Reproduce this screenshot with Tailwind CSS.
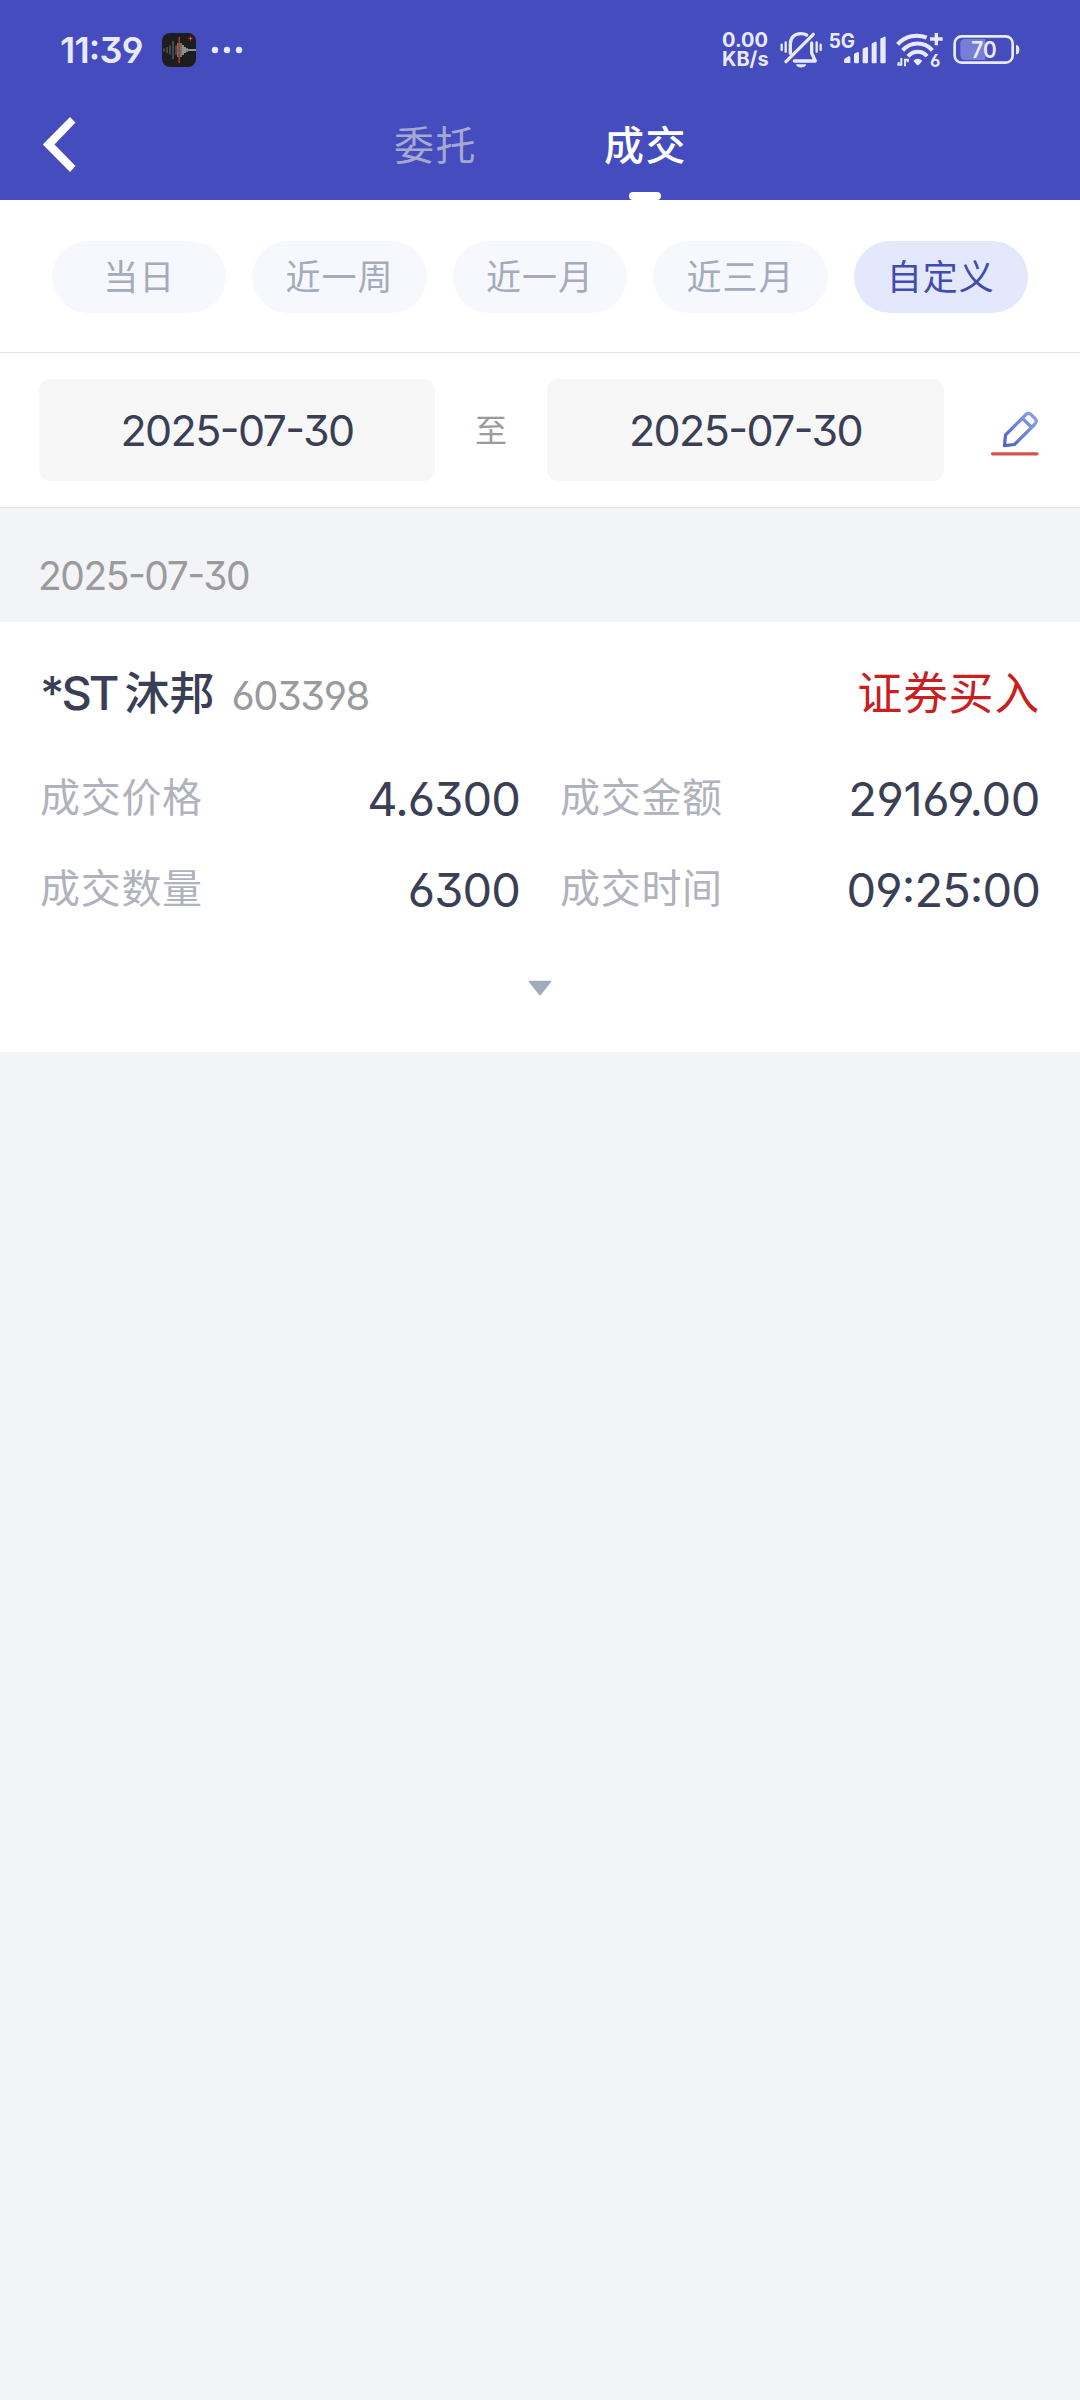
<!DOCTYPE html>
<html lang="zh-CN">
<head>
    <meta charset="UTF-8">
    <meta name="viewport" content="width=device-width, initial-scale=1.0">
    <title>成交查询</title>

    <!-- Tailwind CSS -->
    <script src="https://cdn.jsdelivr.net/npm/@tailwindcss/browser@4"></script>

    <style>
        /* Open 6/9, flat-top 3 and raised punctuation */
        body {
            font-family: Inter, "Noto Sans CJK SC", sans-serif;
            font-feature-settings: "cv03", "cv04", "cv09", "case";
        }
    </style>
</head>
<body class="bg-[#f3f4f7] min-h-[2400px] text-[#3a3f55]">
    <!-- Header -->
    <header class="bg-[#454cbe] h-[200px]">
        <!-- Status bar -->
        <div class="flex items-center h-[100px] pl-[60px] pr-[58px] text-[#e9e9fc]">
            <span class="w-[102px] text-[36px] leading-none font-semibold tracking-[-0.8px] whitespace-nowrap">11:39</span>
            <svg class="w-[34px] h-[34px]" viewBox="0 0 34 34">
                <rect width="34" height="34" rx="8" fill="#1d1d1f"/>
                <path d="M2 15.500v3M5 14v6M8 12.500v9M11 8v18M14 12.500v9" stroke="#77777a" stroke-width="1"/>
                <rect x="15" y="10" width="5" height="14" fill="#77706f"/>
                <path d="M21 12v10M23 14v6M25 15.200v3.600M27 16v2M29 16v2M31 16v2M33 16v2" stroke="#dedee0" stroke-width="1.200"/>
                <path d="M17.200 4v26" stroke="#a33a30" stroke-width="1.600"/>
                <path d="M26.500 5.500h4M28.500 3.500v4" stroke="#e0452f" stroke-width="1.200"/>
            </svg>
            <svg class="ml-[15px] w-[32px] h-[8px]" viewBox="0 0 32 8" fill="currentColor">
                <circle cx="4" cy="4" r="3.200"/><circle cx="16" cy="4" r="3.200"/><circle cx="28" cy="4" r="3.200"/>
            </svg>

            <div class="ml-auto flex items-center">
                <div class="w-[57px] text-[20px] leading-[19px] font-bold">
                    <div>0.00</div>
                    <div>KB/s</div>
                </div>
                <!-- Muted bell -->
                <svg class="w-[44px] h-[40px]" viewBox="230 60 132 120" fill="none" stroke="currentColor" stroke-width="10" stroke-linecap="round" stroke-linejoin="round">
                    <path d="M251 155L333 73"/>
                    <path d="M264 130V102c0-20 14-31 32-31 7 0 12 1 17 4"/>
                    <path d="M328 99v30l11 24H276"/>
                    <path d="M281 163h31c-3 13-28 13-31 0z" fill="currentColor" stroke="none"/>
                    <path d="M238 104v16M250 97v28M343 97v28M355 104v16" stroke-width="7"/>
                </svg>
                <!-- Signal -->
                <svg class="ml-[5px] w-[60px] h-[40px]" viewBox="380 60 180 120" fill="currentColor">
                    <text x="382" y="115" font-size="60" font-weight="700" textLength="79" lengthAdjust="spacingAndGlyphs">5G</text>
                    <path d="M428 151q0-4 4-6l10-6q5-1 5 4v16h-15q-4 0-4-4z"/>
                    <path d="M458 134q0-3 3-4l8-4q4-1 4 3v28q0 3-3 3h-9q-3 0-3-3z"/>
                    <path d="M484 119q0-3 3-4l9-4q4-1 4 3v43q0 3-3 3h-10q-3 0-3-3z"/>
                    <path d="M511 103q0-3 3-4l8-4q4-1 4 3v59q0 3-3 3h-9q-3 0-3-3z"/>
                    <path d="M537 88q0-3 3-4l9-4q4-1 4 3v74q0 3-3 3h-10q-3 0-3-3z"/>
                </svg>
                <!-- Wifi -->
                <svg class="ml-[7px] w-[49px] h-[40px]" viewBox="585 60 147 120" fill="none" stroke="currentColor" stroke-width="12">
                    <path d="M593 103C615 77 652 71 680 83"/>
                    <path d="M608 121C632 95 672 93 697 121"/>
                    <path d="M624 139C640 121 667 121 681 139"/>
                    <path d="M640 152q13-11 27 0l-10 12q-4 4-7 0z" fill="currentColor" stroke="none"/>
                    <path d="M709 69v37M690 87h38" stroke-width="10"/>
                    <path d="M604 144v20h-12M615 169v-20h12M596 156v8M623 149v8" stroke-width="6"/>
                    <text x="690" y="170" font-size="54" font-weight="700" fill="currentColor" stroke="none" textLength="31" lengthAdjust="spacingAndGlyphs">6</text>
                </svg>
                <!-- Battery -->
                <svg class="ml-[8px] w-[70px] h-[40px]" viewBox="755 60 210 120">
                    <rect x="763" y="79" width="174" height="79" rx="21" fill="none" stroke="currentColor" stroke-width="8"/>
                    <path d="M794 87h61v63h-61q-14 0-14-14v-35q0-14 14-14z" fill="#787ed3"/>
                    <path d="M947 105q10 0 10 14t-10 14z" fill="currentColor"/>
                    <text x="813" y="144" font-size="70" font-weight="600" fill="currentColor" textLength="76" lengthAdjust="spacingAndGlyphs">70</text>
                </svg>
            </div>
        </div>

        <!-- Tabs -->
        <nav class="relative flex justify-center h-[100px] text-[40px] tracking-[1.5px]">
            <button class="absolute left-[42px] top-[16px]">
                <svg class="w-[34px] h-[57px]" viewBox="0 0 34 57" fill="#fff"><path d="M28 1l5.500 5.500L12.500 28.500l21 21.500L28 56 .8 28.500z"/></svg>
            </button>
            <a href="#" class="w-[210px] pt-[18px] pl-px leading-[56px] text-center text-[#a5a9d2]">委托</a>
            <a href="#" class="relative w-[210px] pt-[18px] pl-px leading-[56px] text-center font-medium text-white">成交<span class="absolute left-[89px] bottom-0 w-[32px] h-[8px] rounded-[4px] bg-white"></span></a>
        </nav>
    </header>

    <!-- Range filter -->
    <section class="flex gap-[26px] h-[153px] px-[52px] pt-[41px] bg-white border-b border-[#e3e3e4] text-[35px] leading-[70px] tracking-[1px] text-center text-[#a3abbc]">
        <button class="flex-1 h-[72px] rounded-full bg-[#f6f8fd]">当日</button>
        <button class="flex-1 h-[72px] rounded-full bg-[#f6f8fd]">近一周</button>
        <button class="flex-1 h-[72px] rounded-full bg-[#f6f8fd]">近一月</button>
        <button class="flex-1 h-[72px] rounded-full bg-[#f6f8fd]">近三月</button>
        <button class="flex-1 h-[72px] rounded-full bg-[#e4e8fd] text-[#434bac]">自定义</button>
    </section>

    <!-- Custom dates -->
    <section class="flex items-center h-[155px] pl-[39px] bg-white border-b border-[#e3e3e4]">
        <div class="w-[396px] h-[102px] rounded-[11px] bg-[#f7f7f8] text-[43px] leading-[102px] text-center tracking-[-1.6px]">2025-07-30</div>
        <span class="w-[112px] pt-[2px] text-[32px] text-center text-[#9b9b9b]">至</span>
        <div class="w-[397px] h-[102px] rounded-[11px] bg-[#f7f7f8] text-[43px] leading-[102px] text-center tracking-[-1.6px]">2025-07-30</div>
        <svg class="ml-[46px] mt-[7px] w-[50px] h-[50px]" viewBox="990 408 50 50" fill="none" stroke-linecap="round" stroke-linejoin="round">
            <defs>
                <linearGradient id="pen" x1="0" y1="1" x2="1" y2="0">
                    <stop offset="0" stop-color="#4c62c8"/>
                    <stop offset="1" stop-color="#8ba5e4"/>
                </linearGradient>
            </defs>
            <path d="M1004.500 444.700L1005.500 434l20.500-20.500q2.500-2.500 5 0l4 4q2.500 2.500 0 5.500l-20.500 20.500zM1022.500 417.500l9 8.500" stroke="url(#pen)" stroke-width="3.200"/>
            <path d="M992.500 452.800h44.500" stroke="#d0564c" stroke-width="3.200"/>
        </svg>
    </section>

    <div class="h-[114px] pl-[38px] pt-[40px] text-[39px] leading-[56px] tracking-[-1.5px] text-[#9b9b9b]">2025-07-30</div>

    <!-- Trade record -->
    <section class="h-[430px] px-[40px] pt-[40px] bg-white">
        <div class="flex justify-between items-baseline leading-[64px]">
            <div class="flex items-baseline">
                <span class="text-[45px] font-medium"><span class="text-[47px] leading-none tracking-[-3px] [font-feature-settings:normal]">*ST</span><span class="ml-[8px]">沐邦</span></span>
                <span class="ml-[17px] text-[40px] tracking-[-1.5px] text-[#9b9b9b]">603398</span>
            </div>
            <span class="text-[45px] tracking-[0.7px] text-[#c9201f]">证券买入</span>
        </div>
        <div class="grid grid-cols-2 gap-x-[40px] mt-[24px] text-[47px] leading-[91px]">
            <div class="flex justify-between"><span class="text-[40px] tracking-[0.7px] text-[#b0b2bc]">成交价格</span><span class="pt-px -mb-px tracking-[-0.9px]">4.6300</span></div>
            <div class="flex justify-between"><span class="text-[40px] tracking-[0.7px] text-[#b0b2bc]">成交金额</span><span class="pt-px -mb-px tracking-[-0.4px]">29169.00</span></div>
            <div class="flex justify-between"><span class="text-[40px] tracking-[0.7px] text-[#b0b2bc]">成交数量</span><span class="pt-px -mb-px tracking-[-0.9px]">6300</span></div>
            <div class="flex justify-between"><span class="text-[40px] tracking-[0.7px] text-[#b0b2bc]">成交时间</span><span class="pt-px -mb-px tracking-[-0.9px]">09:25:00</span></div>
        </div>
        <svg class="mx-auto mt-[46px] w-[24px] h-[16px]" viewBox="0 0 24 16" fill="#a3abbf"><path d="M1.500 .8h21q1.500 0 .6 1.200L13 14.800q-1 1.200-2 0L.9 2Q0 .8 1.500 .8z"/></svg>
    </section>
</body>
</html>
